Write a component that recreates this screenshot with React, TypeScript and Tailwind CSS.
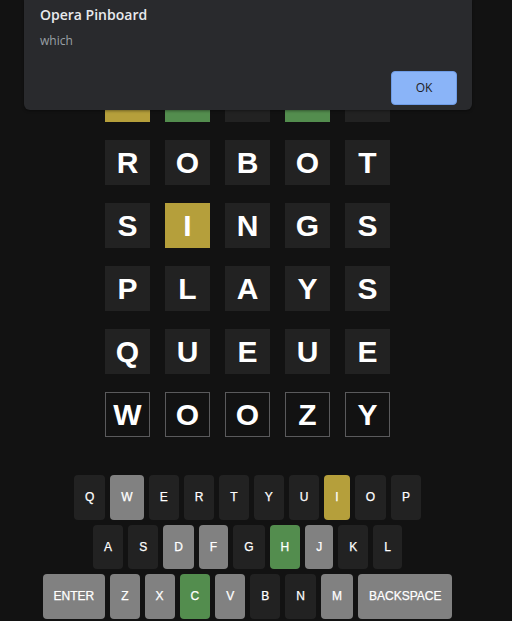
import React from "react";

type TileState = "yellow" | "green" | "dark" | "empty";

const rows: { letters: string; states: TileState[] }[] = [
  { letters: "IHOCN", states: ["yellow", "green", "dark", "green", "dark"] },
  { letters: "ROBOT", states: ["dark", "dark", "dark", "dark", "dark"] },
  { letters: "SINGS", states: ["dark", "yellow", "dark", "dark", "dark"] },
  { letters: "PLAYS", states: ["dark", "dark", "dark", "dark", "dark"] },
  { letters: "QUEUE", states: ["dark", "dark", "dark", "dark", "dark"] },
  { letters: "WOOZY", states: ["empty", "empty", "empty", "empty", "empty"] },
];

const tileClass: Record<TileState, string> = {
  yellow: "bg-[#b59f3b]",
  green: "bg-[#538d4e]",
  dark: "bg-[#222222]",
  empty: "bg-[#121212] border border-[#5a5a5c]",
};

type KeyState = "dark" | "grey" | "yellow" | "green";
const keyClass: Record<KeyState, string> = {
  dark: "bg-[#222222]",
  grey: "bg-[#818181]",
  yellow: "bg-[#b59f3b]",
  green: "bg-[#538d4e]",
};

const kbRows: [string, KeyState][][] = [
  [
    ["Q", "dark"], ["W", "grey"], ["E", "dark"], ["R", "dark"], ["T", "dark"],
    ["Y", "dark"], ["U", "dark"], ["I", "yellow"], ["O", "dark"], ["P", "dark"],
  ],
  [
    ["A", "dark"], ["S", "dark"], ["D", "grey"], ["F", "grey"], ["G", "dark"],
    ["H", "green"], ["J", "grey"], ["K", "dark"], ["L", "dark"],
  ],
  [
    ["ENTER", "grey"], ["Z", "grey"], ["X", "grey"], ["C", "green"], ["V", "grey"],
    ["B", "dark"], ["N", "dark"], ["M", "grey"], ["BACKSPACE", "grey"],
  ],
];

export default function App() {
  return (
    <div className="relative w-[512px] h-[621px] bg-[#121212] overflow-hidden">
      <div
        className="w-[495px] flex flex-col items-center pt-[77px]"
        style={{ fontFamily: '"Liberation Sans", Arial, sans-serif' }}
      >
        <div className="flex flex-col gap-[18px]">
          {rows.map((r, i) => (
            <div key={i} className="flex gap-[15px]">
              {r.letters.split("").map((l, j) => (
                <div
                  key={j}
                  className={`w-[45px] h-[45px] flex items-center justify-center text-white text-[30px] font-bold leading-none ${tileClass[r.states[j]]}`}
                >
                  {l}
                </div>
              ))}
            </div>
          ))}
        </div>
        <div className="mt-[38px] flex flex-col items-center gap-[5px]">
          {kbRows.map((row, i) => (
            <div key={i} className="flex gap-[5px]">
              {row.map(([k, s]) => (
                <div
                  key={k}
                  className={`h-[44.5px] px-[11px] rounded-[4px] flex items-center justify-center text-[12px] text-white [-webkit-text-stroke:0.25px_white] ${keyClass[s]}`}
                >
                  {k}
                </div>
              ))}
            </div>
          ))}
        </div>
      </div>

      <div
        className="absolute top-0 left-[24px] w-[448px] h-[110px] bg-[#292a2d] rounded-b-[6px] shadow-[0_1px_3px_rgba(0,0,0,0.4)] px-[16px] pt-[4px]"
        style={{ fontFamily: '"Open Sans", "Noto Sans", sans-serif' }}
      >
        <div className="text-[14px] font-semibold text-[#e8eaed] leading-[20px] mt-[1px]">
          Opera Pinboard
        </div>
        <div className="text-[12px] text-[#9aa0a6] leading-[16px] mt-[8px]">which</div>
        <div className="flex justify-end mt-[22px] -mr-[1px]">
          <div className="w-[66px] h-[34px] rounded-[4px] bg-[#8ab4f8] border border-[#6f9ce6] flex items-center justify-center text-[12px] text-[#202124]">
            OK
          </div>
        </div>
      </div>
    </div>
  );
}
